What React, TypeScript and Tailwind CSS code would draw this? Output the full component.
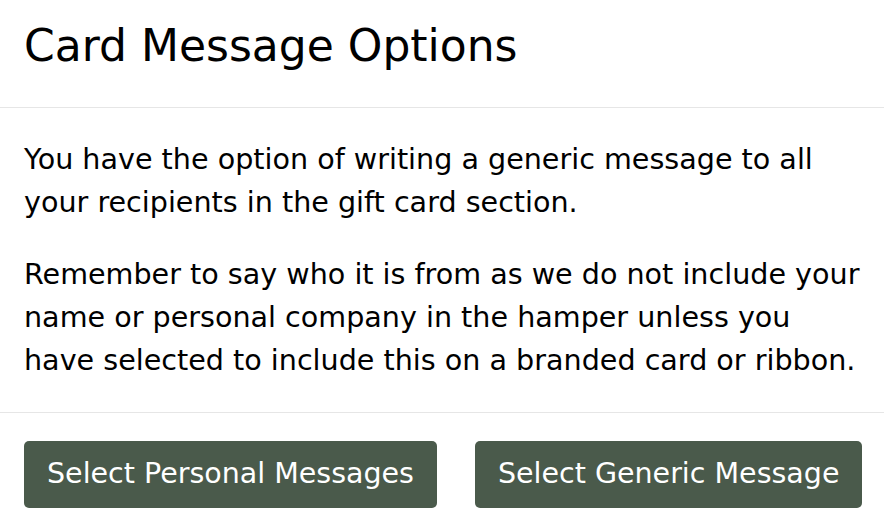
export default function App() {
    return (
        <div className="w-[884px] h-[530px] bg-white text-black font-['DejaVu_Sans',sans-serif] overflow-hidden">
            <header className="px-6 pt-[19px] pb-[35px] border-b border-[#e6e6e6]">
                <h1 className="text-[44px] leading-[53px] font-normal">Card Message Options</h1>
            </header>
            <div className="px-6 py-[30px] flex flex-col gap-[29px] text-[28.6px] leading-[43px]">
                <p>
                    You have the option of writing a generic message to all your recipients in the gift card section.
                </p>
                <p>
                    Remember to say who it is from as we do not include your name or personal company in the hamper unless you have selected to include this on a branded card or ribbon.
                </p>
            </div>
            <footer className="px-6 pt-[28px] border-t border-[#e6e6e6] flex gap-[38px]">
                <button className="shrink-0 whitespace-nowrap h-[67px] px-[23px] rounded-[5px] bg-[#4a5a4b] text-white text-[28.5px]">
                    Select Personal Messages
                </button>
                <button className="shrink-0 whitespace-nowrap h-[67px] px-[23px] rounded-[5px] bg-[#4a5a4b] text-white text-[28.5px]">
                    Select Generic Message
                </button>
            </footer>
        </div>
    )
}
